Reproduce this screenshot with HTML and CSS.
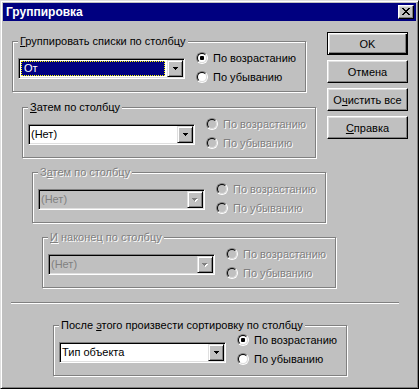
FILE: index.html
```html
<!DOCTYPE html>
<html>
<head>
	<meta charset="utf-8">
	<title>Группировка</title>
	<link rel="stylesheet" href="styles.css">
</head>
<body>
	<div class="window">
		<div class="title">
			<span class="caption">Группировка</span>
			<span class="close">
				<svg width="8" height="7" viewBox="0 0 8 7" shape-rendering="crispEdges">
					<rect x="0" y="0" width="2" height="1"/><rect x="6" y="0" width="2" height="1"/>
					<rect x="1" y="1" width="2" height="1"/><rect x="5" y="1" width="2" height="1"/>
					<rect x="2" y="2" width="4" height="1"/>
					<rect x="3" y="3" width="2" height="1"/>
					<rect x="2" y="4" width="4" height="1"/>
					<rect x="1" y="5" width="2" height="1"/><rect x="5" y="5" width="2" height="1"/>
					<rect x="0" y="6" width="2" height="1"/><rect x="6" y="6" width="2" height="1"/>
				</svg>
			</span>
		</div>

		<div class="top">
			<div class="col">
				<!-- первая группа -->
				<div class="grp">
					<div class="legend"><u>Г</u>руппировать списки по столбцу</div>
					<div class="row">
						<div class="combo">
							<div class="val focus"><span class="sel">От</span></div>
							<div class="drop"><svg width="5" height="3" viewBox="0 0 5 3" shape-rendering="crispEdges"><path d="M0 0h5v1h-1v1h-1v1h-1v-1h-1v-1h-1z"/></svg></div>
						</div>
						<div class="radios">
							<div class="opt"><span class="radio on"></span>По возрастанию</div>
							<div class="opt"><span class="radio"></span>По убыванию</div>
						</div>
					</div>
				</div>

				<div class="grp g2">
					<div class="legend"><u>З</u>атем по столбцу</div>
					<div class="row">
						<div class="combo">
							<div class="val">(Нет)</div>
							<div class="drop"><svg width="5" height="3" viewBox="0 0 5 3" shape-rendering="crispEdges"><path d="M0 0h5v1h-1v1h-1v1h-1v-1h-1v-1h-1z"/></svg></div>
						</div>
						<div class="radios off">
							<div class="opt"><span class="radio"></span>По возрастанию</div>
							<div class="opt"><span class="radio"></span>По убыванию</div>
						</div>
					</div>
				</div>
			</div>

			<div class="buttons">
				<div class="btn def">OK</div>
				<div class="btn">Отмена</div>
				<div class="btn">О<u>ч</u>истить все</div>
				<div class="btn"><u>С</u>правка</div>
			</div>
		</div>

		<div class="grp g3 off">
			<div class="legend">З<u>а</u>тем по столбцу</div>
			<div class="row">
				<div class="combo">
					<div class="val">(Нет)</div>
					<div class="drop"><svg width="6" height="4" viewBox="0 0 6 4" shape-rendering="crispEdges"><path fill="#fff" d="M1 1h5v1h-1v1h-1v1h-1v-1h-1v-1h-1z"/><path fill="#808080" d="M0 0h5v1h-1v1h-1v1h-1v-1h-1v-1h-1z"/></svg></div>
				</div>
				<div class="radios">
					<div class="opt"><span class="radio"></span>По возрастанию</div>
					<div class="opt"><span class="radio"></span>По убыванию</div>
				</div>
			</div>
		</div>

		<div class="grp g4 off">
			<div class="legend"><u>И</u> наконец по столбцу</div>
			<div class="row">
				<div class="combo">
					<div class="val">(Нет)</div>
					<div class="drop"><svg width="6" height="4" viewBox="0 0 6 4" shape-rendering="crispEdges"><path fill="#fff" d="M1 1h5v1h-1v1h-1v1h-1v-1h-1v-1h-1z"/><path fill="#808080" d="M0 0h5v1h-1v1h-1v1h-1v-1h-1v-1h-1z"/></svg></div>
				</div>
				<div class="radios">
					<div class="opt"><span class="radio"></span>По возрастанию</div>
					<div class="opt"><span class="radio"></span>По убыванию</div>
				</div>
			</div>
		</div>

		<div class="sep"></div>

		<div class="grp g5">
			<div class="legend">После <u>э</u>того произвести сортировку по столбцу</div>
			<div class="row">
				<div class="combo">
					<div class="val">Тип объекта</div>
					<div class="drop"><svg width="5" height="3" viewBox="0 0 5 3" shape-rendering="crispEdges"><path d="M0 0h5v1h-1v1h-1v1h-1v-1h-1v-1h-1z"/></svg></div>
				</div>
				<div class="radios">
					<div class="opt"><span class="radio on"></span>По возрастанию</div>
					<div class="opt"><span class="radio"></span>По убыванию</div>
				</div>
			</div>
		</div>
	</div>
</body>
</html>
```
FILE: styles.css
```css
body {
	margin:0;
	background:#c0c0c0;
	font:11px "Liberation Sans", Arial, sans-serif;
	color:#000;
}

.window {
	box-sizing:border-box;
	width:419px;
	height:389px;
	padding:2px;
	background:#c0c0c0;
	border:1px solid;
	border-color:#dfdfdf #000 #000 #dfdfdf;
	box-shadow:inset 1px 1px #fff, inset -1px -1px #808080;
}

/* заголовок окна */
.title {
	height:18px;
	display:flex;
	align-items:center;
	justify-content:space-between;
	padding:0 2px 0 3px;
	background:#000080;
	color:#fff;
	font-weight:bold;
	font-size:12px;
}
.close {
	box-sizing:border-box;
	width:16px;
	height:14px;
	padding-top:2px;
	display:flex;
	justify-content:center;
	background:#c0c0c0;
	border:1px solid;
	border-color:#fff #000 #000 #fff;
	box-shadow:inset -1px -1px #808080, inset 1px 1px #dfdfdf;
}

.top {
	display:flex;
	align-items:flex-start;
}
.col {
	flex:none;
	width:294px;
	padding:20px 0 0 9px;
}

/* рамки групп */
.grp {
	box-sizing:border-box;
	width:294px;
	height:51px;
	border:1px solid #808080;
	box-shadow:inset 1px 1px #fff, 1px 1px #fff;
}
.g2 { margin:15px 0 0 10px; }
.g3 { margin:14px 0 0 29px; }
.g4 { margin:14px 0 0 39px; }
.g5 { margin:21px 0 0 50px; }

.legend {
	display:table;
	height:13px;
	line-height:13px;
	margin:-7px 0 0 5px;
	padding:0 2px;
	background:#c0c0c0;
	white-space:nowrap;
}

.row {
	display:flex;
	align-items:flex-start;
	margin:10px 0 0 5px;
}

/* выпадающий список */
.combo {
	box-sizing:border-box;
	flex:none;
	width:167px;
	height:21px;
	padding:1px;
	display:flex;
	background:#fff;
	border:1px solid;
	border-color:#808080 #fff #fff #808080;
	box-shadow:inset 1px 1px #000, inset -1px -1px #dfdfdf;
}
.val {
	flex:1;
	line-height:17px;
	padding-left:1px;
	white-space:nowrap;
}
.val.focus {
	padding:1px 2px 0 1px;
}
.sel {
	display:block;
	box-sizing:border-box;
	height:15px;
	line-height:13px;
	padding-left:2px;
	background:#000080;
	color:#fff;
	border:1px dotted #ffff00;
}
.drop {
	box-sizing:border-box;
	flex:none;
	width:16px;
	height:17px;
	display:flex;
	align-items:center;
	justify-content:center;
	background:#c0c0c0;
	border:1px solid;
	border-color:#dfdfdf #000 #000 #dfdfdf;
	box-shadow:inset 1px 1px #fff, inset -1px -1px #808080;
}

/* переключатели */
.radios {
	display:flex;
	flex-direction:column;
	gap:7px;
	margin:-6px 0 0 11px;
}
.opt {
	height:12px;
	display:flex;
	align-items:center;
	white-space:nowrap;
}
.radio {
	box-sizing:border-box;
	flex:none;
	width:12px;
	height:12px;
	margin-right:5px;
	border-radius:50%;
	border:1px solid;
	border-color:#808080 #fff #fff #808080;
}
.radio::before {
	content:"";
	display:block;
	box-sizing:border-box;
	width:10px;
	height:10px;
	border-radius:50%;
	border:1px solid;
	border-color:#000 #dfdfdf #dfdfdf #000;
	background:#fff;
}
.radio.on::before {
	background:radial-gradient(circle, #000 2px, #fff 2.5px);
}

.g5 .radios { margin-top:-8px; }

/* недоступные элементы */
.off .legend,
.radios.off,
.off .radios {
	color:#808080;
	text-shadow:1px 1px #fff;
}
.off .radio::before,
.radios.off .radio::before {
	background:#c0c0c0;
}
.off .combo {
	background:#c0c0c0;
	color:#808080;
}

/* кнопки */
.buttons {
	display:flex;
	flex-direction:column;
	gap:5px;
	margin:11px 0 0 21px;
}
.btn {
	box-sizing:border-box;
	width:81px;
	height:23px;
	display:flex;
	align-items:center;
	justify-content:center;
	border:1px solid;
	border-color:#fff #000 #000 #fff;
	box-shadow:inset -1px -1px #808080, inset 1px 1px #dfdfdf;
}
.btn.def {
	border-color:#000;
	box-shadow:inset 1px 1px #fff, inset -1px -1px #000, inset -2px -2px #808080, inset 2px 2px #dfdfdf;
}

.sep {
	width:388px;
	margin:14px 0 0 8px;
	border-top:1px solid #808080;
	border-bottom:1px solid #fff;
}
```
